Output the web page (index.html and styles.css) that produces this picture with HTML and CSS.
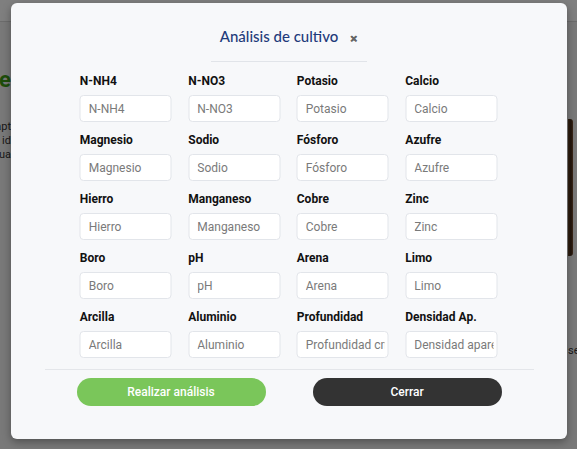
FILE: index.html
```html
<!DOCTYPE html>
<html lang="es">
<head>
<meta charset="utf-8">
<title>Análisis de cultivo</title>
<link rel="stylesheet" href="styles.css">
</head>
<body>
<div class="page">
  <header class="page-header"></header>
  <div class="page-body">
    <div class="left-col">
      <div class="clip big">e</div>
      <div class="clip txt t1">apt</div>
      <div class="clip txt">id</div>
      <div class="clip txt">ua</div>
    </div>
    <div class="spacer"></div>
    <div class="right-col">
      <div class="photo"></div>
      <div class="se">se</div>
    </div>
  </div>
</div>

<div class="overlay">
  <div class="modal">
    <div class="modal-head">
      <h2 class="modal-title">Análisis de cultivo</h2>
      <span class="close">&#x2715;</span>
    </div>
    <div class="title-rule"></div>
    <form class="grid">
      <label class="field"><span class="lbl">N-NH4</span><input placeholder="N-NH4"></label>
      <label class="field"><span class="lbl">N-NO3</span><input placeholder="N-NO3"></label>
      <label class="field"><span class="lbl">Potasio</span><input placeholder="Potasio"></label>
      <label class="field"><span class="lbl">Calcio</span><input placeholder="Calcio"></label>

      <label class="field"><span class="lbl">Magnesio</span><input placeholder="Magnesio"></label>
      <label class="field"><span class="lbl">Sodio</span><input placeholder="Sodio"></label>
      <label class="field"><span class="lbl">Fósforo</span><input placeholder="Fósforo"></label>
      <label class="field"><span class="lbl">Azufre</span><input placeholder="Azufre"></label>

      <label class="field"><span class="lbl">Hierro</span><input placeholder="Hierro"></label>
      <label class="field"><span class="lbl">Manganeso</span><input placeholder="Manganeso"></label>
      <label class="field"><span class="lbl">Cobre</span><input placeholder="Cobre"></label>
      <label class="field"><span class="lbl">Zinc</span><input placeholder="Zinc"></label>

      <label class="field"><span class="lbl">Boro</span><input placeholder="Boro"></label>
      <label class="field"><span class="lbl">pH</span><input placeholder="pH"></label>
      <label class="field"><span class="lbl">Arena</span><input placeholder="Arena"></label>
      <label class="field"><span class="lbl">Limo</span><input placeholder="Limo"></label>

      <label class="field"><span class="lbl">Arcilla</span><input placeholder="Arcilla"></label>
      <label class="field"><span class="lbl">Aluminio</span><input placeholder="Aluminio"></label>
      <label class="field"><span class="lbl">Profundidad</span><input placeholder="Profundidad cm"></label>
      <label class="field"><span class="lbl">Densidad Ap.</span><input placeholder="Densidad aparente"></label>
    </form>
    <div class="foot-rule"></div>
    <div class="actions">
      <button class="btn btn-green" type="button">Realizar análisis</button>
      <button class="btn btn-dark" type="button">Cerrar</button>
    </div>
  </div>
</div>
</body>
</html>
```

FILE: styles.css
```css
* { box-sizing: border-box; }
html, body { margin: 0; padding: 0; }
body {
  width: 577px;
  height: 449px;
  overflow: hidden;
  position: relative;
  font-family: Roboto, "Liberation Sans", sans-serif;
  background: #f2f2f2;
}

/* underlying page */
.page { height: 449px; display: flex; flex-direction: column; }
.page-header { height: 22px; background: #ffffff; border-bottom: 1px solid #d8d8d8; flex: none; }
.page-body { flex: 1; display: flex; }
.left-col { width: 11px; flex: none; padding-top: 45px; }
.clip {
  display: flex;
  justify-content: flex-end;
  white-space: nowrap;
  width: 11px;
}
.big { font-size: 22px; font-weight: 700; color: #3d9a14; line-height: 26px; }
.txt { font-size: 11px; color: #333; line-height: 14px; }
.t1 { margin-top: 27px; }
.spacer { flex: 1; }
.right-col { width: 9px; flex: none; padding-top: 97px; }
.photo { width: 5px; height: 137px; border-radius: 0 3px 3px 0; background: linear-gradient(90deg, #6b4526, #3c2413 60%, #7a5232); }
.se { margin-top: 88px; font-size: 11px; color: #333; line-height: 14px; }

/* overlay and modal */
.overlay {
  position: absolute;
  inset: 0;
  background: rgba(0, 0, 0, 0.5);
  padding: 3px 0 0 11px;
}
.modal {
  width: 556px;
  height: 436px;
  background: #f7f8fa;
  border-radius: 6px;
  box-shadow: 0 3px 8px rgba(0, 0, 0, 0.35);
  display: flex;
  flex-direction: column;
  align-items: center;
  padding-top: 21px;
}
.modal-head {
  display: flex;
  align-items: center;
  gap: 12px;
  height: 24px;
}
.modal-title {
  margin: 0;
  font-family: Lato, "Open Sans", sans-serif;
  font-weight: 500;
  font-size: 15px;
  color: #1f3b7b;
}
.close {
  font-size: 9px;
  font-weight: 700;
  color: #666;
  margin-top: 5px;
  -webkit-text-stroke: 0.6px #666;
}
.title-rule {
  width: 156px;
  height: 1px;
  background: #e1e4e9;
  margin-top: 13px;
}
.grid {
  margin: 12px 0 0 0;
  display: grid;
  grid-template-columns: repeat(4, 92px);
  column-gap: 16.5px;
  row-gap: 11px;
  transform: translateX(-0.5px);
}
.field { display: flex; flex-direction: column; gap: 6px; }
.lbl {
  font-size: 12px;
  line-height: 15px;
  font-weight: 700;
  color: #111;
}
.field input {
  width: 92px;
  height: 27px;
  border: 1px solid #e2e5ea;
  border-radius: 4px;
  background: #fff;
  padding: 0 3px 0 8px;
  font-family: Roboto, "Liberation Sans", sans-serif;
  font-size: 12px;
  color: #333;
  outline: none;
}
.field input::placeholder { color: #7a7a7a; }
.foot-rule {
  width: 489px;
  height: 1px;
  background: #e4e6ea;
  margin-top: 11px;
}
.actions {
  display: flex;
  gap: 47px;
  margin-top: 8px;
}
.btn {
  width: 189px;
  height: 28px;
  border: none;
  border-radius: 14px;
  font-family: Roboto, "Liberation Sans", sans-serif;
  font-size: 12px;
  font-weight: 500;
  color: #fff;
}
.btn-green { background: #7ac65a; }
.btn-dark { background: #333333; }
```
